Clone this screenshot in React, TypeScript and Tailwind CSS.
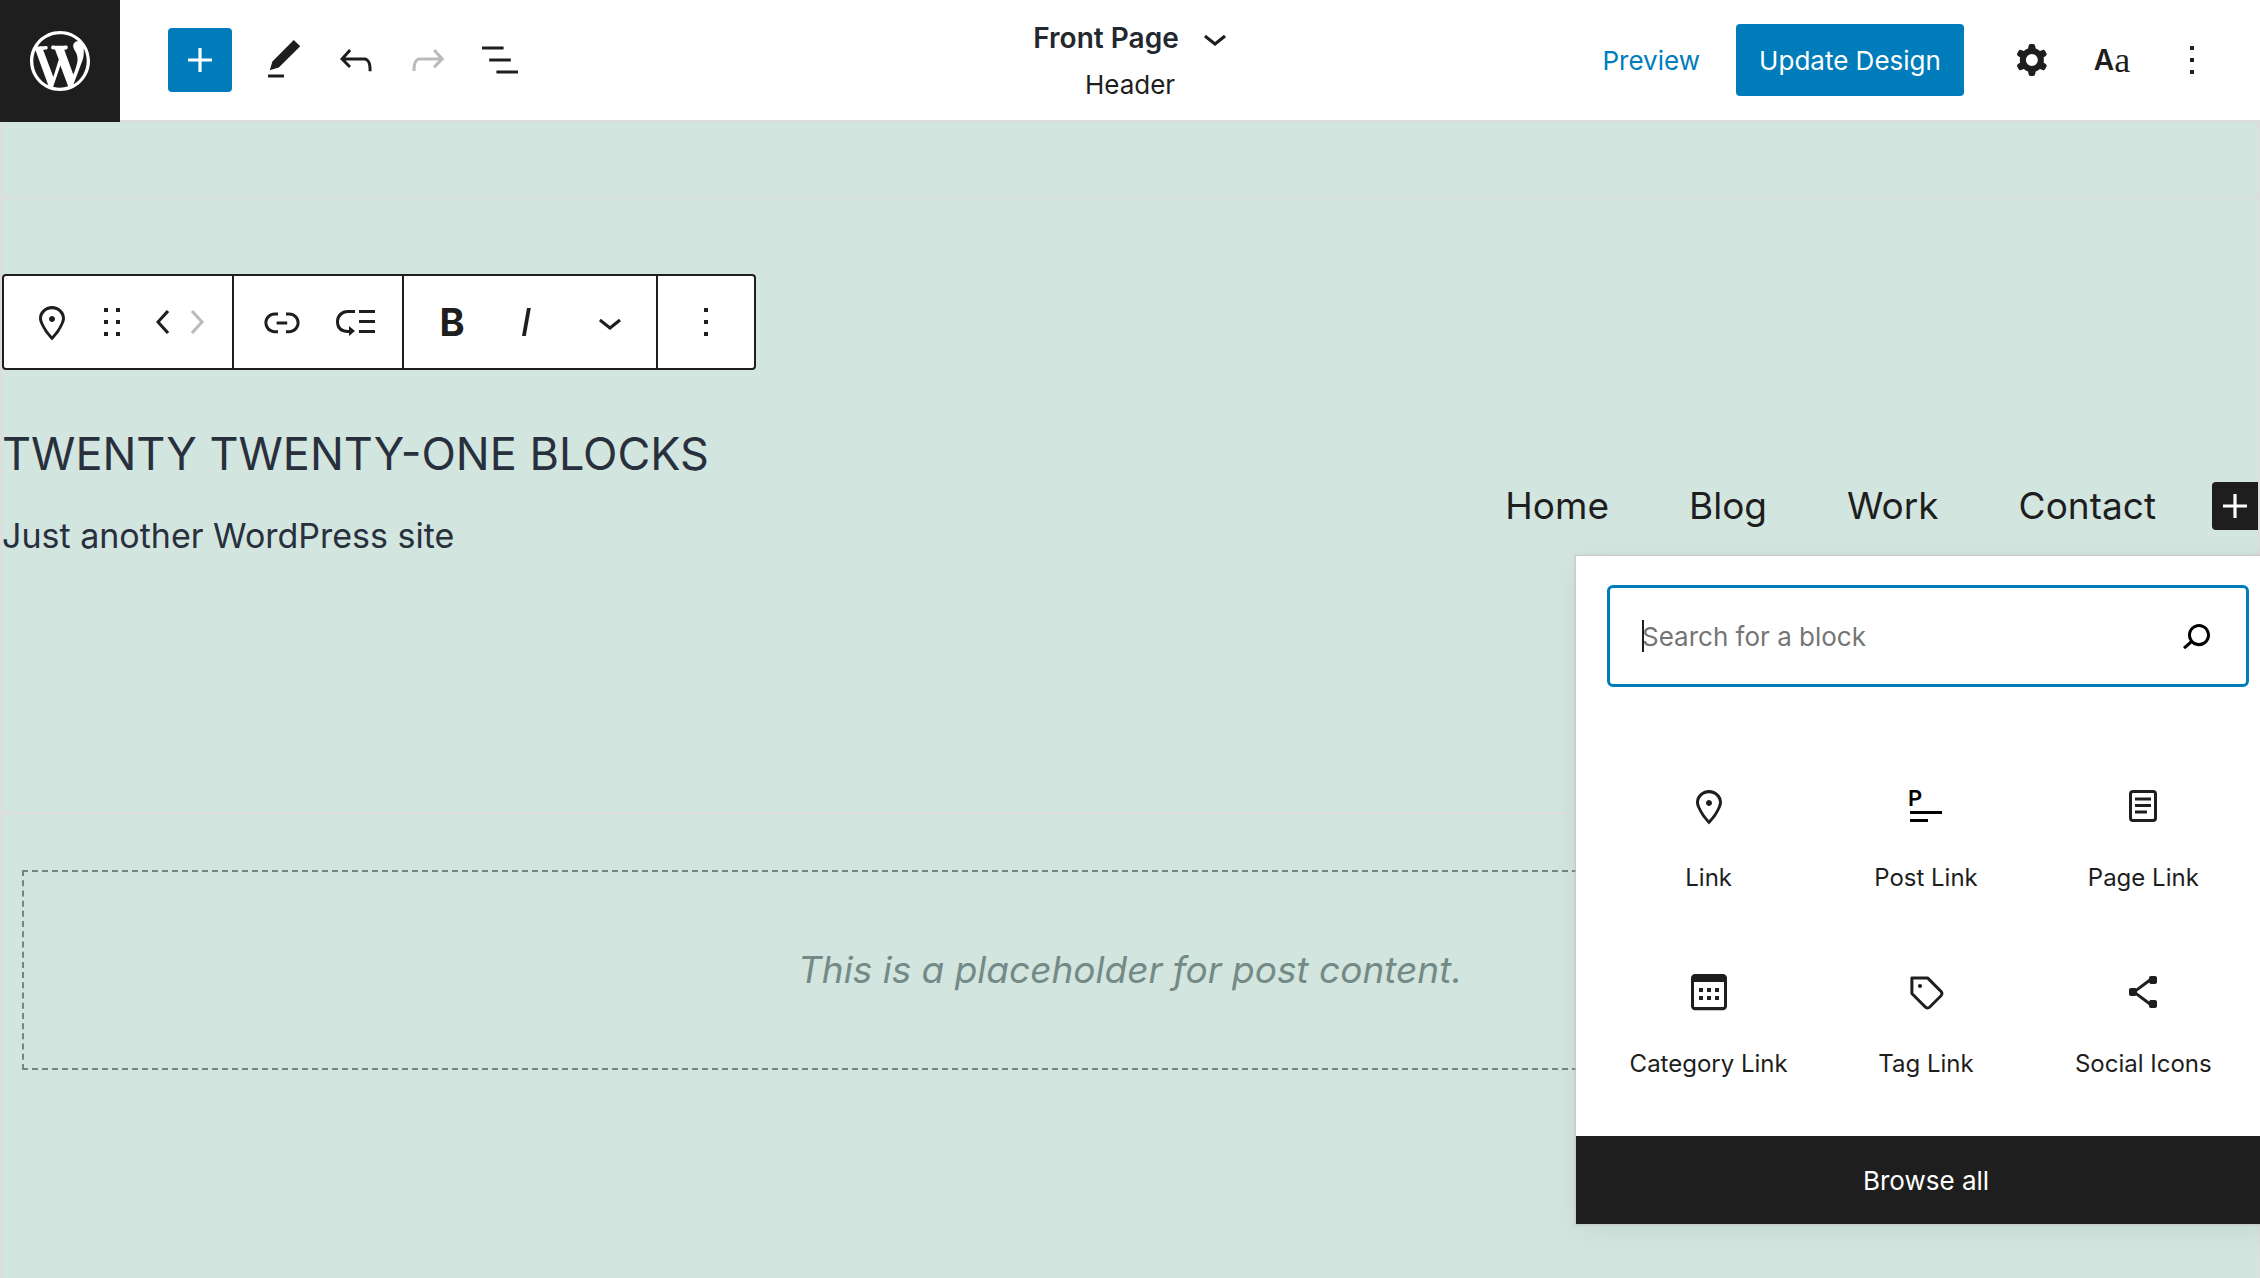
import clsx from "clsx";
import React from "react";

type IconProps = {
  d: string;
  viewBox?: string;
  className?: string;
};

const Icon = ({ d, viewBox = "0 0 24 24", className = "size-12" }: IconProps) => (
  <svg
    viewBox={viewBox}
    className={clsx("shrink-0 fill-current", className)}
    aria-hidden="true"
  >
    <path fillRule="evenodd" clipRule="evenodd" d={d} />
  </svg>
);

const paths = {
  wordpress:
    "M20 10c0-5.51-4.49-10-10-10C4.48 0 0 4.49 0 10c0 5.52 4.48 10 10 10 5.51 0 10-4.48 10-10zM7.78 15.37L4.37 6.22c.55-.02 1.17-.08 1.17-.08.5-.06.44-1.13-.06-1.11 0 0-1.45.11-2.37.11-.18 0-.37 0-.58-.01C4.12 2.69 6.87 1.11 10 1.11c2.33 0 4.45.87 6.05 2.34-.68-.11-1.65.39-1.65 1.58 0 .74.45 1.36.9 2.1.35.61.55 1.36.55 2.46 0 1.49-1.4 5-1.4 5l-3.03-8.37c.54-.02.82-.17.82-.17.5-.05.44-1.25-.06-1.22 0 0-1.44.12-2.38.12-.87 0-2.33-.12-2.33-.12-.5-.03-.56 1.2-.06 1.22l.92.08 1.26 3.41zM17.41 10c.24-.64.74-1.87.43-4.25.7 1.29 1.05 2.71 1.05 4.25 0 3.29-1.73 6.24-4.4 7.78.97-2.59 1.94-5.2 2.92-7.78zM6.1 18.09C3.12 16.65 1.11 13.53 1.11 10c0-1.3.23-2.48.72-3.59C3.25 10.3 4.67 14.2 6.1 18.09zm4.03-6.63l2.58 6.98c-.86.29-1.76.45-2.71.45-.79 0-1.57-.11-2.29-.33.81-2.38 1.62-4.74 2.42-7.1z",
  plus: "M18 11.2h-5.2V6h-1.6v5.2H6v1.6h5.2V18h1.6v-5.2H18z",
  edit: "M20.1 5.1L16.9 2 6.2 12.7l-1.3 4.4 4.5-1.3L20.1 5.1zM4 20.8h8v-1.5H4v1.5z",
  undo: "M18.3 11.7c-.6-.6-1.4-.9-2.3-.9H6.7l2.9-3.3-1.1-1-4.5 5L8.5 16l1-1-2.7-2.7H16c.5 0 .9.2 1.3.5 1 1 1 3.4 1 4.5v.3h1.5v-.2c0-1.5 0-4.3-1.5-5.7z",
  redo: "M15.6 6.5l-1.1 1 2.9 3.3H8c-.9 0-1.7.3-2.3.9-1.4 1.5-1.4 4.2-1.4 5.6v.2h1.5v-.3c0-1.1 0-3.5 1-4.5.3-.3.7-.5 1.3-.5h9.2L14.5 15l1.1 1.1 4.6-4.6-4.6-5z",
  listView:
    "M13.8 5.2H3v1.5h10.8V5.2zm-3.6 12v1.5H21v-1.5H10.2zm7.2-6H6.6v1.5h10.8v-1.5z",
  chevronDown: "M17.5 11.6L12 16l-5.5-4.4.9-1.2L12 14l4.5-3.6 1 1.2z",
  cog: "M10.289 4.836A1 1 0 0111.275 4h1.306a1 1 0 01.987.836l.244 1.466c.787.26 1.503.679 2.108 1.218l1.393-.522a1 1 0 011.216.437l.653 1.13a1 1 0 01-.23 1.273l-1.148.944a6.025 6.025 0 010 2.435l1.149.946a1 1 0 01.23 1.272l-.653 1.13a1 1 0 01-1.216.437l-1.394-.522c-.605.54-1.32.958-2.108 1.218l-.244 1.466a1 1 0 01-.987.836h-1.306a1 1 0 01-.986-.836l-.244-1.466a5.995 5.995 0 01-2.108-1.218l-1.394.522a1 1 0 01-1.217-.436l-.653-1.131a1 1 0 01.23-1.272l1.149-.946a6.026 6.026 0 010-2.435l-1.148-.944a1 1 0 01-.23-1.272l.653-1.131a1 1 0 011.217-.437l1.393.522a5.994 5.994 0 012.108-1.218l.244-1.466zM14.929 12a3 3 0 11-6 0 3 3 0 016 0z",
  more: "M13 19h-2v-2h2v2zm0-6h-2v-2h2v2zm0-6h-2V5h2v2z",
  marker:
    "M12 9c-.8 0-1.5.7-1.5 1.5S11.2 12 12 12s1.5-.7 1.5-1.5S12.8 9 12 9zm0-5c-3.6 0-6.5 2.8-6.5 6.2 0 .8.3 1.8.9 3.1.5 1.1 1.2 2.3 2 3.6.7 1 3 3.8 3.2 3.9l.4.5.4-.5c.2-.2 2.6-2.9 3.2-3.9.8-1.2 1.5-2.5 2-3.6.6-1.3.9-2.3.9-3.1C18.5 6.8 15.6 4 12 4zm4.3 8.7c-.5 1-1.1 2.2-1.9 3.4-.5.7-1.7 2.2-2.4 3-.7-.8-1.9-2.3-2.4-3-.8-1.2-1.4-2.3-1.9-3.3-.6-1.4-.7-2.2-.7-2.5 0-2.6 2.2-4.7 5-4.7s5 2.1 5 4.7c0 .2-.1 1-.7 2.4z",
  drag: "M5 4h2V2H5v2zm6-2v2h2V2h-2zm-6 8h2V8H5v2zm6 0h2V8h-2v2zm-6 6h2v-2H5v2zm6 0h2v-2h-2v2z",
  moveLeft: "M14.6 7l-1.2-1L8 12l5.4 6 1.2-1-4.6-5z",
  moveRight: "M10.6 6L9.4 7l4.6 5-4.6 5 1.2 1 5.4-6z",
  link: "M15.6 7.2H14v1.5h1.6c2 0 3.7 1.7 3.7 3.7s-1.7 3.7-3.7 3.7H14v1.5h1.6c2.8 0 5.2-2.3 5.2-5.2 0-2.9-2.3-5.2-5.2-5.2zM4.7 12.4c0-2 1.7-3.7 3.7-3.7H10V7.2H8.4c-2.9 0-5.2 2.3-5.2 5.2 0 2.9 2.3 5.2 5.2 5.2H10v-1.5H8.4c-2 0-3.7-1.7-3.7-3.7zm4.6.9h5.3v-1.5H9.3v1.5z",
  submenu:
    "M2 12c0 3.6 2.4 5.5 6 5.5h.5V19l3-2.5-3-2.5v2H8c-2.5 0-4.5-1.5-4.5-4s2-4.5 4.5-4.5h3.5V6H8c-3.6 0-6 2.4-6 6zm19.5-1h-8v1.5h8V11zm0 5h-8v1.5h8V16zm0-10h-8v1.5h8V6z",
  slant: "M12.5 5L10 19h1.9l2.5-14z",
  search:
    "M13.5 6C10.5 6 8 8.5 8 11.5c0 1.1.3 2.1.9 3l-3.4 3 1 1.1 3.4-2.9c1 .9 2.2 1.4 3.6 1.4 3 0 5.5-2.5 5.5-5.5C19 8.5 16.5 6 13.5 6zm0 9.5c-2.2 0-4-1.8-4-4s1.8-4 4-4 4 1.8 4 4-1.8 4-4 4z",
  page: "M7 5.5h10a.5.5 0 01.5.5v12a.5.5 0 01-.5.5H7a.5.5 0 01-.5-.5V6a.5.5 0 01.5-.5zM17 4H7a2 2 0 00-2 2v12a2 2 0 002 2h10a2 2 0 002-2V6a2 2 0 00-2-2zm-1 3.75H8v1.5h8v-1.5zM8 11h8v1.5H8V11zm6 3.25H8v1.5h6v-1.5z",
  category:
    "M19 3H5c-1.1 0-2 .9-2 2v14.1c0 1.1.9 2 2 2h14c1.1 0 2-.9 2-2V5c0-1.1-.9-2-2-2zm.5 16c0 .3-.2.5-.5.5H5c-.3 0-.5-.2-.5-.5V7h15v12zM9 10H7v2h2v-2zm0 4H7v2h2v-2zm4-4h-2v2h2v-2zm4 0h-2v2h2v-2zm-4 4h-2v2h2v-2zm4 0h-2v2h2v-2z",
  tag: "M20.1 11.2l-6.7-6.7c-.1-.1-.3-.2-.5-.2H5c-.4-.1-.8.3-.8.7v7.8c0 .2.1.4.2.5l6.7 6.7c.2.2.5.4.7.5s.6.2.9.2c.3 0 .6-.1.9-.2.3-.1.5-.3.8-.5l5.6-5.6c.4-.4.7-1 .7-1.6.1-.6-.2-1.2-.6-1.6zM19 13.4L13.4 19c-.1.1-.2.1-.3.2-.2.1-.4.1-.6 0-.1 0-.2-.1-.3-.2l-6.5-6.5V5.8h6.8l6.5 6.5c.2.2.2.4.2.6 0 .1 0 .3-.2.5zM9 8c-.6 0-1 .4-1 1s.4 1 1 1 1-.4 1-1-.4-1-1-1z",
  share:
    "M9 11.8l6.1-4.5c.1.4.4.7.9.7h2c.6 0 1-.4 1-1V5c0-.6-.4-1-1-1h-2c-.6 0-1 .4-1 1v.4l-6.4 4.8c-.2-.1-.4-.2-.6-.2H6c-.6 0-1 .4-1 1v2c0 .6.4 1 1 1h2c.2 0 .4-.1.6-.2l6.4 4.8v.4c0 .6.4 1 1 1h2c.6 0 1-.4 1-1v-2c0-.6-.4-1-1-1h-2c-.5 0-.8.3-.9.7L9 12.2v-.4z",
};

const PostLinkIcon = () => (
  <svg viewBox="0 0 24 24" className="size-12 fill-black" aria-hidden="true">
    <text x="3" y="12" className="font-['Inter',sans-serif] text-[11px] font-semibold">
      P
    </text>
    <path d="M4 20h9v-1.5H4V20zm0-5.5V16h16v-1.5H4z" />
  </svg>
);

const blocks = [
  { label: "Link", icon: <Icon d={paths.marker} /> },
  { label: "Post Link", icon: <PostLinkIcon /> },
  { label: "Page Link", icon: <Icon d={paths.page} /> },
  { label: "Category Link", icon: <Icon d={paths.category} /> },
  { label: "Tag Link", icon: <Icon d={paths.tag} /> },
  { label: "Social Icons", icon: <Icon d={paths.share} /> },
];

type ToolButtonProps = {
  label: string;
  children: React.ReactNode;
  className?: string;
  disabled?: boolean;
};

const ToolButton = ({ label, children, className, disabled }: ToolButtonProps) => (
  <button
    type="button"
    aria-label={label}
    disabled={disabled}
    className={clsx(
      "flex shrink-0 items-center justify-center disabled:text-[#bbbbbb]",
      className
    )}
  >
    {children}
  </button>
);

const EditorHeader = () => (
  <header className="relative z-10 grid grid-cols-[1fr_auto_1fr] border-b-2 border-[#dddddd] bg-white">
    <div className="flex items-center">
      <a
        href="#dashboard"
        aria-label="Dashboard"
        className="-mb-0.5 flex h-[122px] w-[120px] items-center justify-center self-start bg-[#1e1e1e] text-white"
      >
        <Icon d={paths.wordpress} viewBox="-2 -2 24 24" className="size-[72px]" />
      </a>
      <ToolButton
        label="Add block"
        className="mr-4 ml-12 size-16 rounded-sm bg-[#007cba] text-white"
      >
        <Icon d={paths.plus} />
      </ToolButton>
      <ToolButton label="Tools" className="size-[72px]">
        <Icon d={paths.edit} />
      </ToolButton>
      <ToolButton label="Undo" className="size-[72px]">
        <Icon d={paths.undo} />
      </ToolButton>
      <ToolButton label="Redo" className="size-[72px]" disabled>
        <Icon d={paths.redo} />
      </ToolButton>
      <ToolButton label="List View" className="size-[72px]">
        <Icon d={paths.listView} />
      </ToolButton>
    </div>

    <div className="flex flex-col items-center pt-4">
      <div className="flex items-center">
        <h1 className="text-[28px] leading-[44px] font-semibold text-[#23282e]">
          Front Page
        </h1>
        <ToolButton label="Show template details" className="-mr-3 ml-3 h-11">
          <Icon d={paths.chevronDown} />
        </ToolButton>
      </div>
      <p className="text-[26px] leading-[50px]">Header</p>
    </div>

    <div className="flex items-center justify-end pr-8">
      <a href="#preview" className="px-9 text-[26px] text-[#007cba]">
        Preview
      </a>
      <button
        type="button"
        className="mr-8 h-[72px] w-[228px] rounded-sm bg-[#007cba] text-[26px] text-white"
      >
        Update Design
      </button>
      <div className="flex gap-2">
        <ToolButton label="Settings" className="size-[72px]">
          <Icon d={paths.cog} />
        </ToolButton>
        <ToolButton label="Styles" className="size-[72px] text-[28px] leading-9">
          <span className="font-semibold">A</span>
          <span className="font-['Liberation_Serif',serif] text-[36px]">a</span>
        </ToolButton>
        <ToolButton label="Options" className="size-[72px]">
          <Icon d={paths.more} />
        </ToolButton>
      </div>
    </div>
  </header>
);

const BlockToolbar = () => (
  <div
    role="toolbar"
    aria-label="Block tools"
    className="flex h-24 w-fit divide-x-2 divide-[#1e1e1e] rounded-sm border-2 border-[#1e1e1e] bg-white"
  >
    <div className="flex items-center gap-[18px] pr-5 pl-6">
      <ToolButton label="Link">
        <Icon d={paths.marker} />
      </ToolButton>
      <ToolButton label="Drag">
        <Icon d={paths.drag} viewBox="0 0 18 18" className="size-9" />
      </ToolButton>
      <div className="flex">
        <ToolButton label="Move left">
          <Icon d={paths.moveLeft} viewBox="4 0 16 24" className="h-12 w-8" />
        </ToolButton>
        <ToolButton label="Move right" disabled>
          <Icon d={paths.moveRight} viewBox="4 0 16 24" className="h-12 w-8" />
        </ToolButton>
      </div>
    </div>
    <div className="flex items-center gap-[26px] pr-[22px] pl-6">
      <ToolButton label="Edit link">
        <Icon d={paths.link} />
      </ToolButton>
      <ToolButton label="Add submenu">
        <Icon d={paths.submenu} />
      </ToolButton>
    </div>
    <div className="flex items-center gap-[26px] pr-[22px] pl-6">
      <ToolButton label="Bold" className="size-12 text-[38px] font-bold">
        B
      </ToolButton>
      <ToolButton label="Italic">
        <Icon d={paths.slant} />
      </ToolButton>
      <ToolButton label="More rich text controls" className="ml-2.5">
        <Icon d={paths.chevronDown} />
      </ToolButton>
    </div>
    <div className="flex items-center px-6">
      <ToolButton label="More options">
        <Icon d={paths.more} />
      </ToolButton>
    </div>
  </div>
);

const BlockInserter = () => (
  <div className="absolute top-[74px] -left-[636px] z-20 w-[700px] bg-white shadow-[0_0_2px_1px_#c4c4c4,0_6px_30px_rgba(25,30,35,0.06)]">
    <div className="relative pt-[29px] pr-[27px] pl-[31px]">
      <input
        type="search"
        aria-label="Search for a block"
        placeholder="Search for a block"
        className="h-[102px] w-full rounded-md border-[3px] border-[#007cba] bg-white pr-20 pl-8 text-[26px] outline-none placeholder:text-[#757575]"
      />
      {/* Caret */}
      <span className="absolute top-16 left-[66px] h-8 w-0.5 bg-[#1e1e1e]" />
      <ToolButton
        label="Search"
        className="absolute top-14 right-14 text-black"
      >
        <Icon d={paths.search} />
      </ToolButton>
    </div>

    <div className="grid grid-cols-3 gap-y-18 px-6 pt-[95px] pb-[54px]">
      {blocks.map((block) => (
        <button
          key={block.label}
          type="button"
          className="flex flex-col items-center gap-[30px] text-[24px] leading-9"
        >
          {block.icon}
          <span>{block.label}</span>
        </button>
      ))}
    </div>

    <button
      type="button"
      className="h-[88px] w-full bg-[#1e1e1e] text-[26px] text-white"
    >
      Browse all
    </button>
  </div>
);

const SiteHeader = () => (
  <section className="mt-[75px] border-y-2 border-[#dddddd] pt-[75px] pb-[246px]">
    <BlockToolbar />
    <div className="mt-[52px] flex items-start justify-between">
      <div className="text-[#28303d]">
        <h2 className="text-[45px] leading-[64px]">TWENTY TWENTY-ONE BLOCKS</h2>
        <p className="mt-5 text-[34px] leading-[60px]">
          Just another WordPress site
        </p>
      </div>
      <nav className="flex items-center pt-[60px]">
        <ul className="flex gap-20 text-[37px] leading-[48px]">
          {["Home", "Blog", "Work", "Contact"].map((item) => (
            <li key={item}>
              <a href={`#${item.toLowerCase()}`}>{item}</a>
            </li>
          ))}
        </ul>
        <div className="relative ml-14">
          <ToolButton
            label="Add block"
            className="h-12 w-[46px] rounded-l-sm bg-[#1e1e1e] text-white"
          >
            <Icon d={paths.plus} />
          </ToolButton>
          <BlockInserter />
        </div>
      </nav>
    </div>
  </section>
);

export default function App() {
  return (
    <div className="flex min-h-screen flex-col overflow-hidden bg-[#d2e5df] font-['Inter',sans-serif] text-[#1e1e1e]">
      <EditorHeader />
      <main className="grow border-x-2 border-[#dddddd]">
        <SiteHeader />
        <div className="mx-5 mt-14 flex h-[200px] items-center justify-center border-2 border-dashed border-[#6f8883]">
          <p className="text-[37px] text-[#748a86] italic">
            This is a placeholder for post content.
          </p>
        </div>
      </main>
    </div>
  );
}
